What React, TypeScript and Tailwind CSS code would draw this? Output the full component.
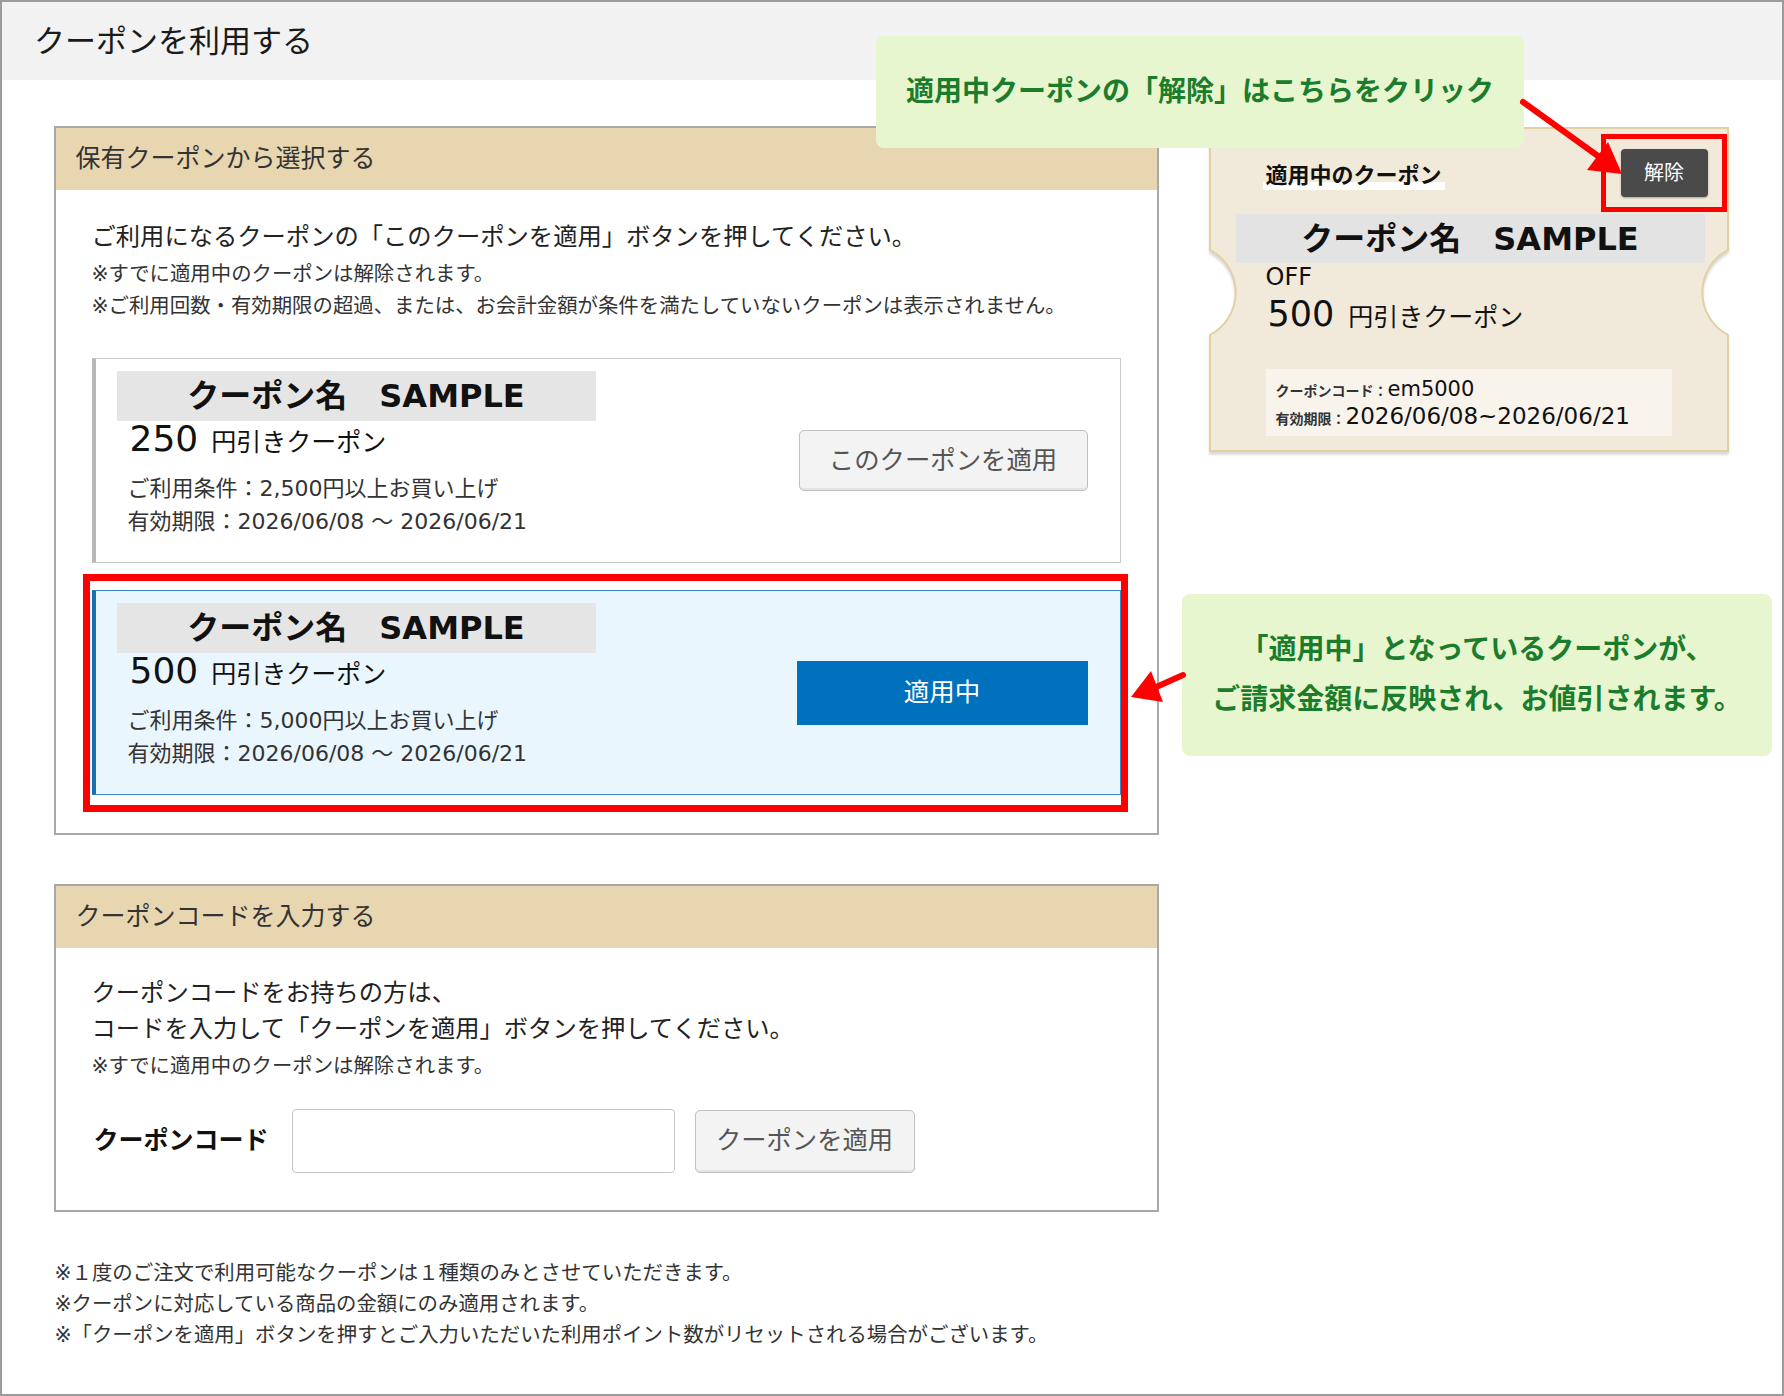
import React from "react";

function SectionBox({
  title,
  className,
  children,
}: {
  title: string;
  className?: string;
  children: React.ReactNode;
}) {
  return (
    <section className={`border-2 border-[#a8a8a8] bg-white ${className ?? ""}`}>
      <h2 className="flex h-[62px] items-center bg-[#e8d6b0] pl-[20px] text-[25px] text-[#333]">
        {title}
      </h2>
      {children}
    </section>
  );
}

function CouponCard({
  amount,
  condition,
  active = false,
}: {
  amount: string;
  condition: string;
  active?: boolean;
}) {
  return (
    <div
      className={`relative flex h-[205px] items-center justify-between border border-l-4 ${
        active
          ? "border-[#3a86c4] border-l-[#1a6fb2] bg-[#eaf6fe]"
          : "border-[#cacaca] border-l-[#b8b8b8] bg-white"
      }`}
    >
      <div className="self-start pl-[21px] pt-[12px] text-[#111]">
        <div className="flex h-[50px] w-[479px] items-center justify-center bg-[#e5e5e5] text-[32px] font-bold">
          クーポン名　SAMPLE
        </div>
        <div className="flex h-[36px] items-baseline pl-[13px] leading-none">
          <span className="text-[36px]">{amount}</span>
          <span className="ml-[13px] text-[25px]">円引きクーポン</span>
        </div>
        <div className="mt-[15px] pl-[11px] text-[22px] leading-[33px] text-[#333]">
          <p>ご利用条件：{condition}円以上お買い上げ</p>
          <p>有効期限：2026/06/08 ～ 2026/06/21</p>
        </div>
      </div>
      {active ? (
        <button className="mr-[32px] h-[64px] w-[291px] bg-[#0071bc] text-[25.5px] text-white">
          適用中
        </button>
      ) : (
        <button className="mr-[32px] h-[61px] w-[289px] rounded-[5px] border border-[#c0c0c0] bg-[#f3f3f3] text-[25.4px] text-[#555] shadow-[inset_0_-2px_0_rgba(0,0,0,0.06)]">
          このクーポンを適用
        </button>
      )}
      {active && (
        <div className="pointer-events-none absolute -left-[13px] -top-[17px] h-[238px] w-[1045px] border-[7px] border-[#ff0000]" />
      )}
    </div>
  );
}

function AppliedTicket() {
  return (
    <div className="relative mt-[1px] h-[326px] w-[520px] text-[#111]">
      <svg
        className="absolute inset-0 drop-shadow-[0_3px_1px_rgba(0,0,0,0.14)]"
        width="520"
        height="326"
        viewBox="0 0 520 326"
      >
        <path
          d="M1 1 H519 V123 A48 48 0 0 0 519 208 V324 H1 V208 A48 48 0 0 0 1 123 Z"
          fill="#f1e9da"
          stroke="#e3d1a6"
          strokeWidth="2"
        />
      </svg>
      <div className="relative">
        <div className="flex items-center justify-between pl-[57px] pr-[21px] pt-[22px]">
          <span className="-ml-[3px] mt-[8px] inline-block bg-[linear-gradient(transparent_68%,#fff_68%)] px-[3px] pb-[2px] text-[22px] font-bold leading-[24px]">
            適用中のクーポン
          </span>
          <button className="h-[48px] w-[87px] rounded-[4px] bg-[#4a4a4a] text-[20px] text-white shadow-[0_1px_2px_rgba(0,0,0,0.3)]">
            解除
          </button>
        </div>
        <div className="ml-[27px] mt-[17px] flex h-[49px] w-[469px] items-center justify-center bg-[#e3e3e3] text-[32px] font-bold">
          クーポン名　SAMPLE
        </div>
        <p className="pl-[57px] text-[24px] leading-[28px]">OFF</p>
        <div className="mt-[6px] flex h-[36px] items-baseline pl-[59px] leading-none">
          <span className="text-[35px]">500</span>
          <span className="ml-[14px] text-[25px]">円引きクーポン</span>
        </div>
        <div className="ml-[57px] mt-[36px] h-[67px] w-[406px] bg-[#f8f4ec] pl-[10px] pt-[8px] leading-[25px]">
          <p>
            <span className="text-[14px] font-bold text-[#333]">クーポンコード：</span>
            <span className="text-[21px]">em5000</span>
          </p>
          <p>
            <span className="text-[14px] font-bold text-[#333]">有効期限：</span>
            <span className="text-[23px]">2026/06/08~2026/06/21</span>
          </p>
        </div>
      </div>
      <div className="pointer-events-none absolute left-[392px] top-[7px] h-[78px] w-[126px] border-[5px] border-[#ff0000]" />
    </div>
  );
}

export default function App() {
  return (
    <div className="relative h-[1396px] w-[1784px] overflow-hidden border-2 border-[#9c9c9c] bg-white font-['DejaVu_Sans','Noto_Sans_CJK_JP',sans-serif] text-[#222]">
      <header className="flex h-[78px] items-center bg-[#f2f2f2] pl-[32px] text-[31px] text-[#1a1a1a]">
        クーポンを利用する
      </header>

      <div className="flex items-start pl-[51.5px] pt-[46px]">
        <div className="w-[1105px]">
          <SectionBox title="保有クーポンから選択する">
            <div className="px-[36px] pb-[38px] pt-[29px]">
              <p className="text-[24.3px] leading-[36px] text-[#222]">
                ご利用になるクーポンの「このクーポンを適用」ボタンを押してください。
              </p>
              <div className="mt-[3px] text-[20.4px] leading-[32px] text-[#333]">
                <p>※すでに適用中のクーポンは解除されます。</p>
                <p>
                  ※ご利用回数・有効期限の超過、または、お会計金額が条件を満たしていないクーポンは表示されません。
                </p>
              </div>
              <div className="mt-[36px] flex flex-col gap-[27px]">
                <CouponCard amount="250" condition="2,500" />
                <CouponCard amount="500" condition="5,000" active />
              </div>
            </div>
          </SectionBox>

          <SectionBox title="クーポンコードを入力する" className="mt-[49px]">
            <div className="px-[36px] pb-[37px] pt-[27px]">
              <div className="text-[24.3px] leading-[36px] text-[#222]">
                <p>クーポンコードをお持ちの方は、</p>
                <p>コードを入力して「クーポンを適用」ボタンを押してください。</p>
              </div>
              <p className="mt-[3px] text-[20.4px] leading-[32px] text-[#333]">
                ※すでに適用中のクーポンは解除されます。
              </p>
              <div className="mt-[27px] flex items-center">
                <label className="w-[200px] pl-[2px] text-[25px] font-bold text-[#111]">
                  クーポンコード
                </label>
                <input
                  type="text"
                  className="h-[64px] w-[383px] rounded-[4px] border border-[#c4c4c4] bg-white px-3 text-[22px]"
                />
                <button className="ml-[20px] h-[63px] w-[220px] rounded-[5px] border border-[#c0c0c0] bg-[#f3f3f3] text-[25.3px] text-[#555] shadow-[inset_0_-2px_0_rgba(0,0,0,0.06)]">
                  クーポンを適用
                </button>
              </div>
            </div>
          </SectionBox>

          <div className="mt-[46px] pl-[1px] text-[20.4px] leading-[31px] text-[#333]">
            <p>※１度のご注文で利用可能なクーポンは１種類のみとさせていただきます。</p>
            <p>※クーポンに対応している商品の金額にのみ適用されます。</p>
            <p>
              ※「クーポンを適用」ボタンを押すとご入力いただいた利用ポイント数がリセットされる場合がございます。
            </p>
          </div>
        </div>

        <div className="ml-[50px]">
          <AppliedTicket />
        </div>
      </div>

      {/* annotations */}
      <div className="absolute left-[874px] top-[34px] flex h-[112px] w-[648px] items-center justify-center rounded-[8px] bg-[#e7f6cf] text-[28px] font-bold text-[#1b7d2c]">
        適用中クーポンの「解除」はこちらをクリック
      </div>
      <div className="absolute left-[1180px] top-[592px] flex h-[162px] w-[590px] flex-col items-center justify-center rounded-[8px] bg-[#e7f6cf] text-[28px] font-bold leading-[50px] text-[#1b7d2c]">
        <p>「適用中」となっているクーポンが、</p>
        <p>ご請求金額に反映され、お値引されます。</p>
      </div>

      <svg
        className="pointer-events-none absolute left-0 top-0"
        width="1780"
        height="1392"
        viewBox="2 2 1780 1392"
      >
        <line x1="1523" y1="102" x2="1598" y2="156" stroke="#ff0000" strokeWidth="6" strokeLinecap="round" />
        <polygon points="1587,170 1608,142 1622,174" fill="#ff0000" />
        <line x1="1183" y1="675" x2="1154" y2="688" stroke="#ff0000" strokeWidth="6" strokeLinecap="round" />
        <polygon points="1131,697 1151,671 1163,702" fill="#ff0000" />
      </svg>
    </div>
  );
}
